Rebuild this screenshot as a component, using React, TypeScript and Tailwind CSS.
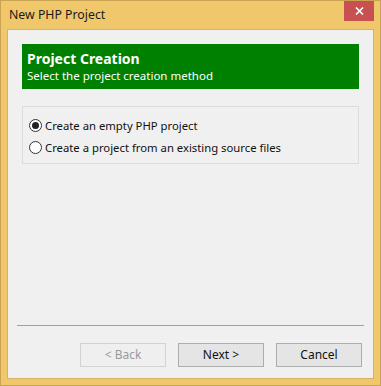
import React from 'react';

// Windows 8 style wizard dialog: "New PHP Project"

function Radio({ checked }: { checked?: boolean }) {
  return (
    <span className="w-[13px] h-[13px] rounded-full border border-[#333333] bg-white flex items-center justify-center shrink-0">
      {checked && <span className="w-[7px] h-[7px] rounded-full bg-[#222222]" />}
    </span>
  );
}

function WizButton({ label, disabled }: { label: string; disabled?: boolean }) {
  return (
    <button
      className={
        disabled
          ? 'w-[86px] h-[24px] border border-[#d2d2d2] bg-[#efefef] text-[#9a9a9a] text-[12px]'
          : 'w-[86px] h-[24px] border border-[#adadad] bg-[#e5e5e5] text-[#111111] text-[12px]'
      }
    >
      {label}
    </button>
  );
}

export default function App() {
  return (
    <div
      className="w-[381px] h-[386px] bg-[#f0c86b] border border-[#c9a352] flex flex-col"
      style={{ fontFamily: '"Noto Sans", "Open Sans", sans-serif' }}
    >
      {/* Title bar */}
      <div className="h-[28px] flex items-start pl-[8px] pr-[6px]">
        <span className="mt-[5px] text-[12.3px] text-[#1a1a1a]">New PHP Project</span>
        <div className="ml-auto w-[30px] h-[20px] bg-[#c75050] flex items-center justify-center">
          <svg width="9" height="8" viewBox="0 0 9 8">
            <path d="M1 0.5 L8 7.5 M8 0.5 L1 7.5" stroke="white" strokeWidth="1.6" />
          </svg>
        </div>
      </div>

      {/* Client area */}
      <div className="flex-1 mx-[6px] mb-[6px] bg-[#f0f0f0] border border-[#d6b266] flex flex-col px-[14px] pt-[14px] pb-[11px]">
        <div className="h-[45px] bg-[#008000] text-white px-[5px] pt-[6px] leading-[17px]">
          <div className="text-[14px] font-bold">Project Creation</div>
          <div className="text-[11.5px]">Select the project creation method</div>
        </div>

        <div className="mt-[17px] h-[58px] border border-[#dcdcdc] flex flex-col gap-[9px] px-[6px] pt-[12px] text-[11.3px] text-[#111111]">
          <label className="flex items-center gap-[3px] leading-none">
            <Radio checked />
            <span>Create an empty PHP project</span>
          </label>
          <label className="flex items-center gap-[3px] leading-none">
            <Radio />
            <span>Create a project from an existing source files</span>
          </label>
        </div>

        <div className="flex-1" />

        <div className="-mx-[5px] h-px bg-[#a0a0a0]" />
        <div className="flex justify-end gap-[12px] mt-[17px] -mr-[3px]">
          <WizButton label="< Back" disabled />
          <WizButton label="Next >" />
          <WizButton label="Cancel" />
        </div>
      </div>
    </div>
  );
}
